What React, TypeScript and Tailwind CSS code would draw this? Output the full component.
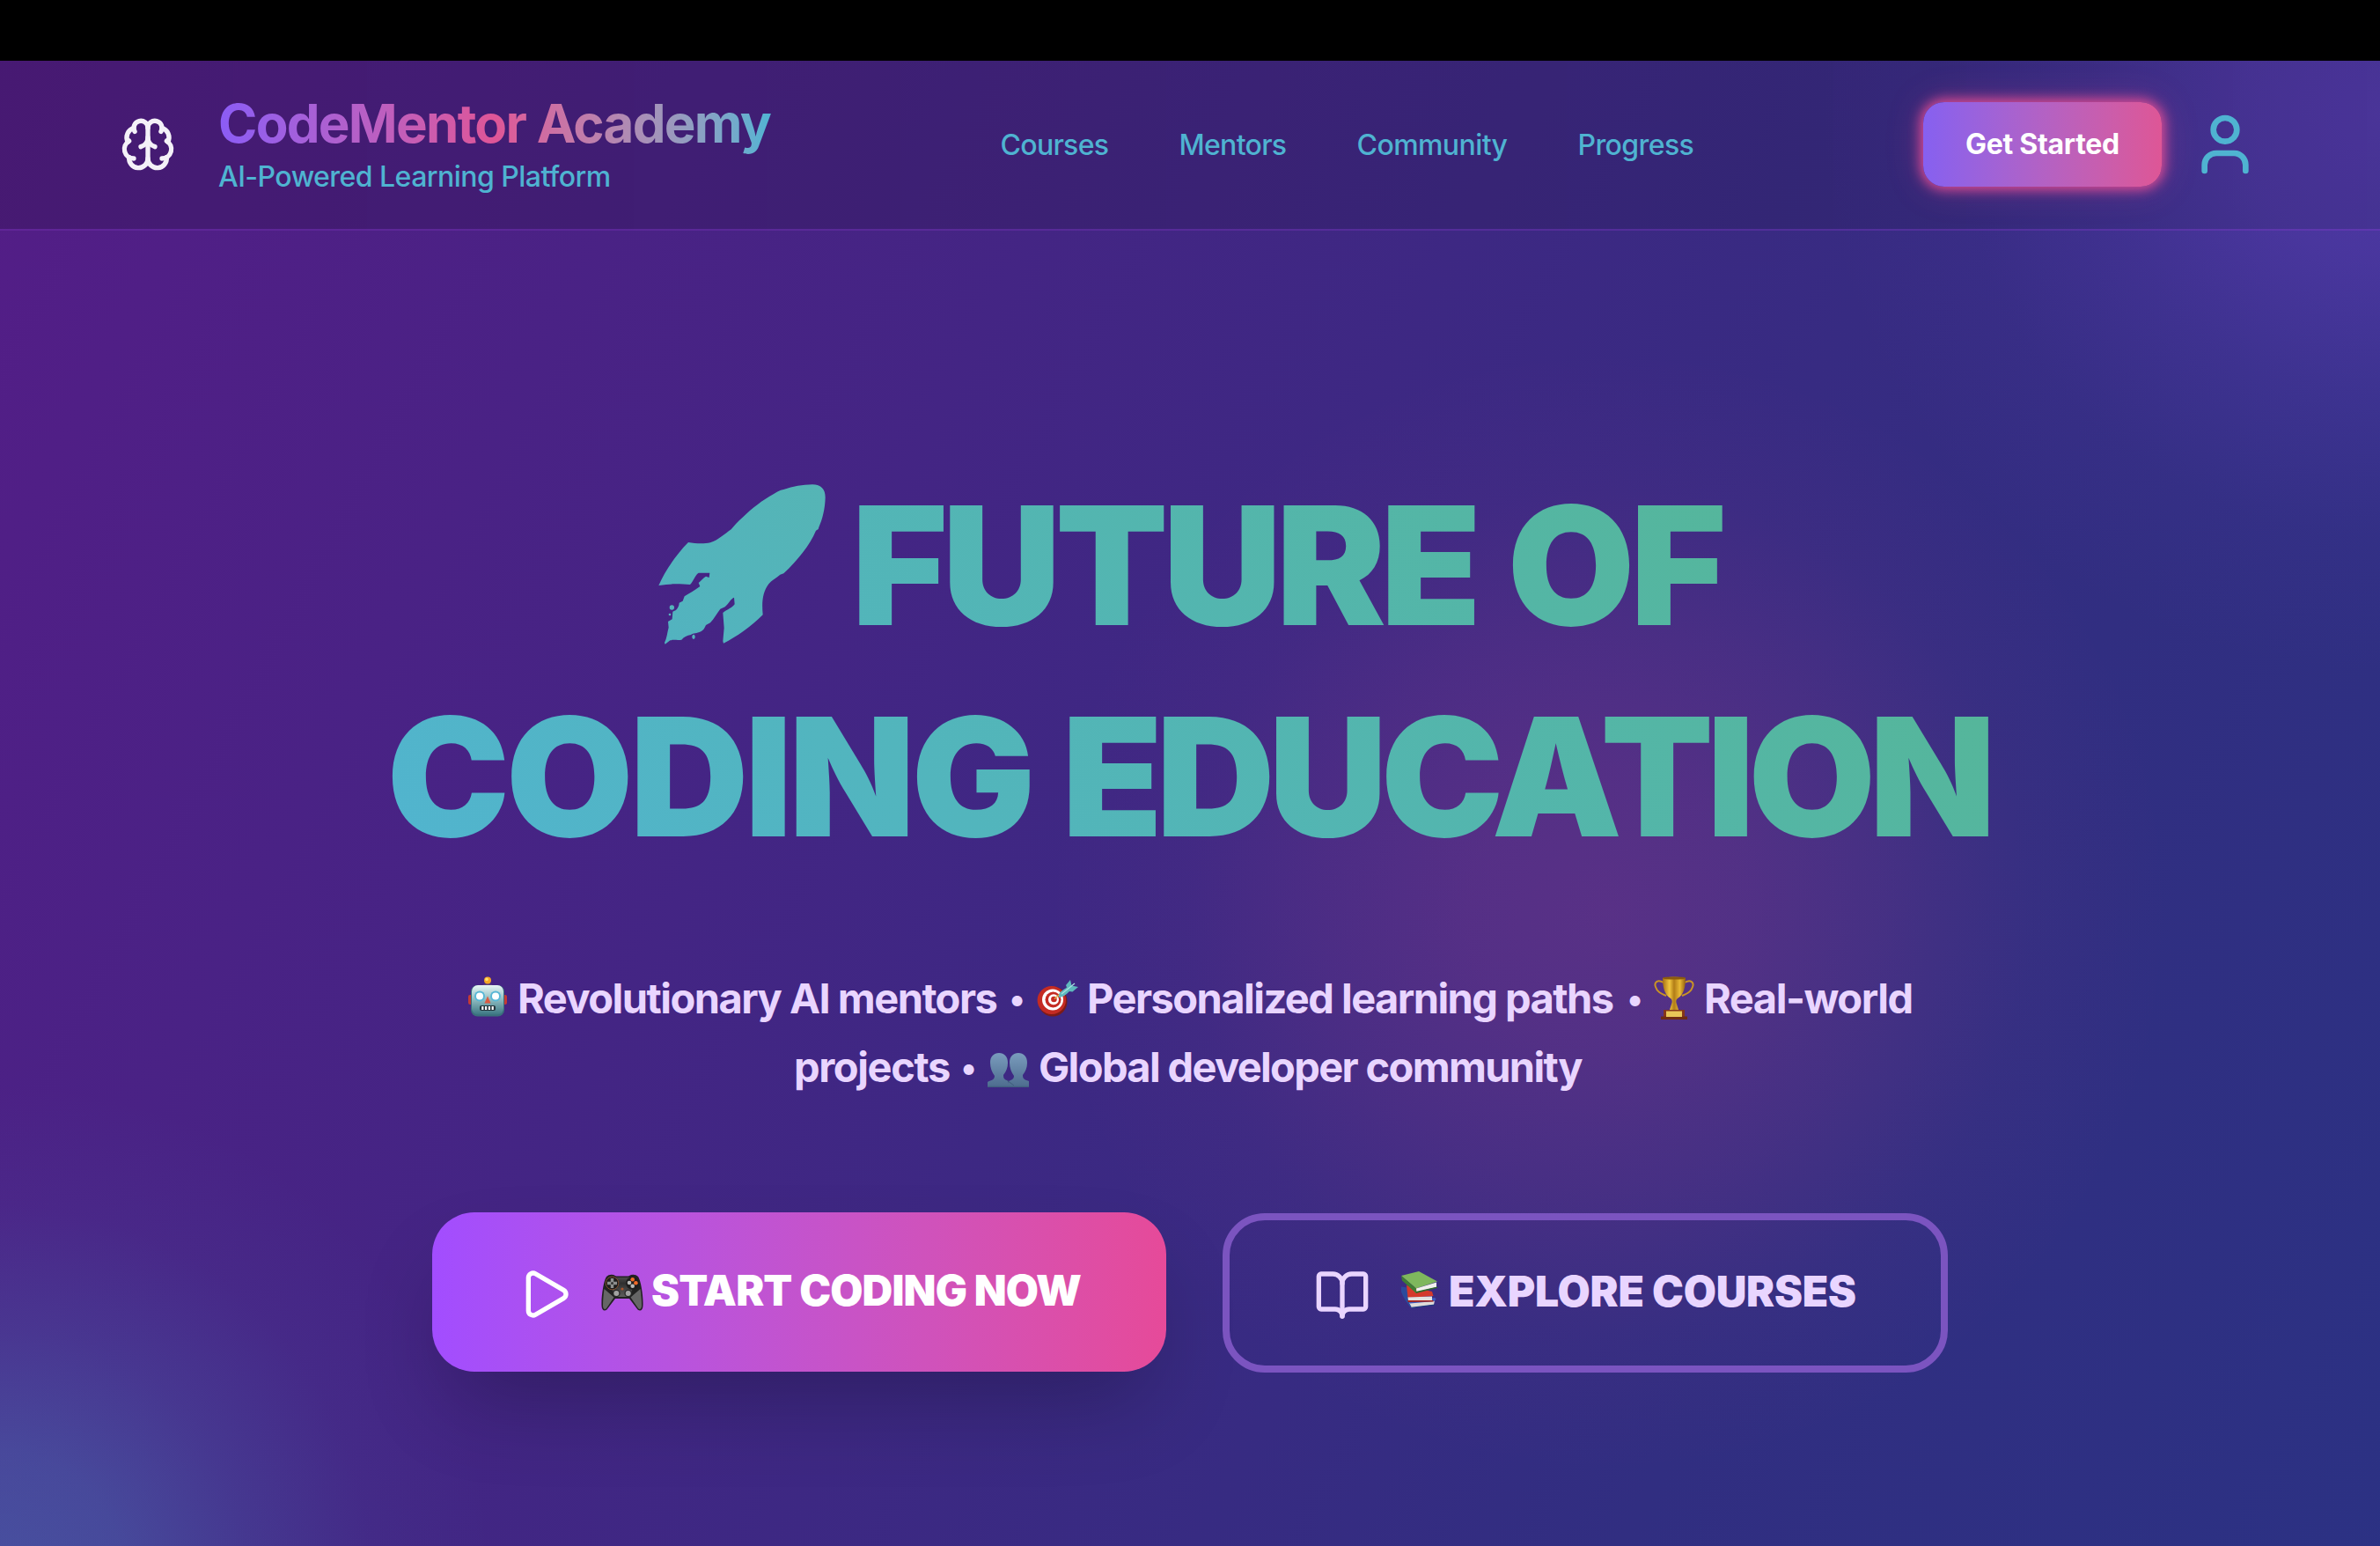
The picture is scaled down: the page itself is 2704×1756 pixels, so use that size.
import { BookOpen, Brain, Play, User } from "lucide-react";

function Rocket() {
  return (
    <svg viewBox="85 60 570 545" className="h-[181.7px] w-[190px] shrink-0" role="img" aria-label="🚀">
      <defs>
        <linearGradient id="rocket-fill" x1="0" y1="1" x2="1" y2="0">
          <stop offset="0" stopColor="#52b3c0" />
          <stop offset="1" stopColor="#55b5b5" />
        </linearGradient>
      </defs>
      <g fill="url(#rocket-fill)">
        <path d="M187 258C210 262 240 264 262 259C290 250 310 230 333 214L350 194C380 165 412 134 450 110C470 97 485 88 502 80L512 78C545 67 575 62 610 61C640 61 654 78 654 105C653 145 644 180 632 206L630 213L622 218C600 270 560 318 512 364L500 368C487 379 470 388 461 400C440 428 437 462 441 505C400 545 352 580 307 602L305 595L309 550L305 498C320 487 338 480 345 469L343 446C334 448 325 466 312 478L296 485C284 501 275 518 262 532L247 540C243 550 238 558 230 562C215 570 205 566 196 573C182 576 172 580 164 590C150 592 136 589 125 592L108 605L106 600C114 585 115 565 120 548L118 528L132 520L134 494L145 489C150 482 155 478 156 464L168 458L174 442C190 432 208 422 227 408L222 396C230 390 238 378 247 374L258 378L260 362L222 362C208 372 205 390 193 402C170 402 140 396 86 405C105 360 145 300 187 258Z" />
        <circle cx="131" cy="480" r="8" />
        <circle cx="124" cy="504" r="4" />
        <ellipse cx="205" cy="580" rx="5" ry="8" />
      </g>
    </svg>
  );
}

function Robot() {
  return (
    <svg viewBox="0 0 44 46" className="-mt-[4px] h-[46px] w-[44px] shrink-0" role="img" aria-label="🤖">
      <defs>
        <linearGradient id="robot-head" x1="0" y1="0" x2="0" y2="1">
          <stop offset="0" stopColor="#e9f6f5" />
          <stop offset=".4" stopColor="#9cc7cb" />
          <stop offset="1" stopColor="#3c7783" />
        </linearGradient>
      </defs>
      <rect x="0" y="21" width="6" height="11" rx="2" fill="#c43a35" />
      <rect x="38" y="21" width="6" height="11" rx="2" fill="#c43a35" />
      <path d="M16 11q1-3 6-3t6 3z" fill="#5b3f7a" />
      <circle cx="22" cy="4.4" r="4" fill="#f5a623" />
      <circle cx="21" cy="3.4" r="1.8" fill="#ffdf70" />
      <rect x="3" y="10" width="38" height="35.5" rx="7.5" fill="#3a6f7c" />
      <rect x="4" y="10" width="36" height="33.5" rx="7" fill="url(#robot-head)" />
      <circle cx="13" cy="22.5" r="6" fill="#57b7d6" />
      <circle cx="31" cy="22.5" r="6" fill="#57b7d6" />
      <circle cx="13" cy="22.5" r="4" fill="#fff" />
      <circle cx="31" cy="22.5" r="4" fill="#fff" />
      <path d="M22 22.5l3.6 8h-7.2z" fill="#dc5a41" />
      <rect x="13" y="33" width="18" height="6" rx="2" fill="#23343b" />
      <path d="M15.2 34h2.2v4h-2.2zM19 34h2.2v4H19zM22.8 34H25v4h-2.2zM26.6 34h2.2v4h-2.2z" fill="#fff" />
    </svg>
  );
}

function Target() {
  return (
    <svg viewBox="0 0 47 42" className="ml-[16px] h-[42px] w-[47px] shrink-0" role="img" aria-label="🎯">
      <ellipse cx="18" cy="24.5" rx="16.5" ry="17" fill="#7c1b17" />
      <ellipse cx="16.8" cy="23" rx="16.2" ry="16" fill="#c42b23" />
      <circle cx="18" cy="22.5" r="12" fill="#fff" />
      <circle cx="18.5" cy="22.5" r="9" fill="#c42b23" />
      <circle cx="19" cy="22.3" r="6" fill="#fff" />
      <circle cx="19.4" cy="22" r="3.3" fill="#c42b23" />
      <path d="M20 21.5L31 12" stroke="#e0b24a" strokeWidth="1.6" />
      <path d="M25 17c1-4 6-6 9-8.500L33 6l5-6 1.500 6.500L47 8l-6.500 5.500L37 13c-3 3-6 6-12 7z" fill="#5fb9bd" />
      <path d="M28 16L43 4" stroke="#a9e3e2" strokeWidth="1.200" />
    </svg>
  );
}

function Trophy() {
  return (
    <svg viewBox="0 0 46 49" className="-mt-[2px] ml-[15px] h-[49px] w-[46px] shrink-0" role="img" aria-label="🏆">
      <defs>
        <linearGradient id="trophy-gold" x1="0" y1="0" x2="1" y2="0">
          <stop offset="0" stopColor="#a66f14" />
          <stop offset=".3" stopColor="#f0c63f" />
          <stop offset=".5" stopColor="#b27d17" />
          <stop offset=".75" stopColor="#e8b935" />
          <stop offset="1" stopColor="#93600f" />
        </linearGradient>
      </defs>
      <path d="M11 7C4 3 0 7 2 12c1.500 5 5 7 12 10M35 7c7-4 11 0 9 5-1.500 5-5 7-12 10" fill="none" stroke="#c99325" strokeWidth="2" />
      <path d="M10 2q13-3 26 0c0 10-2 19-9 23-1.500 1-2 3-1.500 5l2.500 8H18l2.500-8c.5-2 0-4-1.500-5-7-4-9-13-9-23z" fill="url(#trophy-gold)" />
      <ellipse cx="23" cy="2" rx="13" ry="1.600" fill="#8c5b0e" />
      <path d="M11 38h24v8H11z" fill="#863519" />
      <path d="M8 45.500h30V49H8z" fill="#6f2a14" />
      <path d="M14 39.500h18V46H14z" fill="#e8c558" />
    </svg>
  );
}

function People() {
  return (
    <svg viewBox="0 0 47 39" className="ml-[15px] mt-[6px] h-[39px] w-[47px] shrink-0" role="img" aria-label="👥">
      <defs>
        <linearGradient id="people-fill" x1="0" y1="0" x2="0" y2="1">
          <stop offset="0" stopColor="#7a9cbd" />
          <stop offset="1" stopColor="#4d6c8e" />
        </linearGradient>
      </defs>
      <g fill="url(#people-fill)">
        <path d="M3 11C3 4 7 0 13 0s10 4 10 11c0 6-2 10-5 14 0 4 1 5 5 6.500L25 39H0v-6c3-2 8-2 8-7-3-4-5-9-5-15z" />
        <path d="M25 11C25 4 29 0 35 0s10 4 10 11c0 6-2 10-5 14 0 4 1 5 7 7v7H22l2-7c3-1.500 6-2 6-6-3-4-5-9-5-15z" />
      </g>
      <path d="M0 38.300h47M22 31l8 6" stroke="#3f5c7c" strokeWidth="1" />
    </svg>
  );
}

function Gamepad() {
  return (
    <svg viewBox="0 0 48 42" className="h-[42px] w-[48px] shrink-0" role="img" aria-label="🎮">
      <defs>
        <linearGradient id="pad-body" x1="0" y1="0" x2="0" y2="1">
          <stop offset="0" stopColor="#4a4a4a" />
          <stop offset=".3" stopColor="#2f2f2f" />
          <stop offset="1" stopColor="#5e5e5c" />
        </linearGradient>
      </defs>
      <path d="M6 3Q9 0 14 1l3 1.500h14L34 1q5-1 8 2c3 4 6 22 5.500 33 0 5-3 7-6 4.500L32 28H16L6.500 40.500C3.500 43 .5 41 .5 36 0 25 3 7 6 3z" fill="#222" />
      <path d="M3.500 17l11 9.500-8.500 12.500c-2 2-4 .5-4-3 0-6 .5-12 1.500-19zM44.500 17l-11 9.500 8.500 12.500c2 2 4 .5 4-3 0-6-.5-12-1.500-19z" fill="#666" />
      <path d="M14 4h20l2 12-4 10H16l-4-10z" fill="url(#pad-body)" />
      <circle cx="12.500" cy="10.500" r="7.300" fill="#1d1d1d" stroke="#83502f" strokeWidth="1" />
      <circle cx="35.500" cy="10.500" r="7.300" fill="#1d1d1d" />
      <path d="M10.800 5h3.400v3.800H18v3.400h-3.800V16h-3.400v-3.800H7V8.800h3.800z" fill="#8d8f8e" />
      <circle cx="12.500" cy="10.500" r="1.500" fill="#333" />
      <circle cx="35.700" cy="6.300" r="2.300" fill="#f06a28" />
      <circle cx="39.400" cy="10.200" r="2.300" fill="#f06a28" />
      <circle cx="32" cy="10" r="2.300" fill="#b9bab9" />
      <circle cx="35.700" cy="13.800" r="2.300" fill="#b9bab9" />
      <circle cx="24" cy="17" r="1.600" fill="#a8532c" />
      <circle cx="17.300" cy="22" r="4.300" fill="#292929" />
      <circle cx="30.700" cy="22" r="4.300" fill="#292929" />
      <circle cx="17.300" cy="22" r="3" fill="#a2a3a2" />
      <circle cx="30.700" cy="22" r="3" fill="#a2a3a2" />
    </svg>
  );
}

function Books() {
  return (
    <svg viewBox="0 0 42 42" className="ml-[3px] h-[42px] w-[42px] shrink-0" role="img" aria-label="📚">
      <path d="M0 17.500l7 1 3 14 1.500 9.500C6 36 1 27 0 23z" fill="#2b4a9c" />
      <path d="M9 35.500L38 33l-1 5-25 3.500z" fill="#dedcda" />
      <path d="M8 34L38 30l1.500 1.500-2 2.500L10 36.500z" fill="#3b5bc0" />
      <path d="M11.500 40.700L38 37.500v1.300L12.500 42z" fill="#1f3a80" />
      <path d="M6 16l29 7 1.500 5-29 2z" fill="#d4392c" />
      <path d="M7.500 29.500L35 28.500v4.500L8 33.500z" fill="#e4e1df" />
      <path d="M7 33h29.500v1.500L8 35z" fill="#a8251d" />
      <path d="M0 5L20 0l21 11.500-24 8z" fill="#7fb75d" />
      <path d="M0 5l17 14.500L17 25 1 10.500z" fill="#3f7d33" />
      <path d="M17 19.500L40 12.500v5.500L17.500 23.500z" fill="#f2f0ee" />
      <path d="M16.500 23L41 17.500v1.300L17 25z" fill="#2f6a2a" />
    </svg>
  );
}

function Bullet() {
  return <span className="flex w-[13px] shrink-0 justify-center text-[38px] font-semibold tracking-normal">•</span>;
}

function Header() {
  return (
    <header className="h-[193px] border-b-2 border-purple-500/25 bg-linear-to-r from-black/15 to-black/8 px-[136px]">
      <div className="flex h-full items-center justify-between">
        <div className="flex w-[740px] items-center gap-12">
          <Brain className="-mt-px size-16 shrink-0 text-[#f4f1f8]" strokeWidth={2} />
          <div className="flex flex-col">
            <span className="-mt-px mb-px w-[628px] whitespace-nowrap bg-linear-to-r from-[#8b5cf6] via-[#df5597] to-[#4fb4d3] bg-clip-text text-[60px] leading-[72px] font-bold tracking-[-1.72px] text-transparent">
              CodeMentor Academy
            </span>
            <span className="whitespace-nowrap text-[32px] leading-[48px] font-medium tracking-[-0.54px] text-[#4fb3d1]">
              AI-Powered Learning Platform
            </span>
          </div>
        </div>
        <nav className="flex w-[788px] text-[32px] leading-[48px] font-medium text-[#4fb3d1]">
          <a className="w-[203px] tracking-[-0.7px]">Courses</a>
          <a className="w-[202px] tracking-[-0.7px]">Mentors</a>
          <a className="w-[251px] tracking-[-0.58px]">Community</a>
          <a className="tracking-[-0.6px]">Progress</a>
        </nav>
        <div className="-mt-px flex items-center gap-8">
          <button className="h-24 w-[271px] rounded-3xl bg-linear-to-r from-[#8660f0] to-[#de5696] text-[32px] font-bold tracking-[-0.3px] text-white shadow-[0_0_14px_3px_rgba(240,80,150,0.9),0_0_40px_rgba(236,72,153,0.3)]">
            Get Started
          </button>
          <User className="size-20 text-[#4fb3d1]" strokeWidth={2} />
        </div>
      </div>
    </header>
  );
}

export default function App() {
  return (
    <div className="flex h-[1756px] w-[2704px] flex-col overflow-hidden font-['Inter',sans-serif]">
      <div className="h-[69px] shrink-0 bg-black" />
      <div className="flex-1 bg-[radial-gradient(circle_560px_at_0px_1720px,rgba(70,175,215,0.32)_0%,rgba(70,175,215,0.27)_25%,rgba(70,175,215,0.14)_50%,rgba(70,175,215,0.04)_75%,rgba(70,175,215,0)_100%),radial-gradient(circle_640px_at_2704px_60px,rgba(139,76,235,0.34)_0%,rgba(139,76,235,0.27)_25%,rgba(139,76,235,0.14)_50%,rgba(139,76,235,0.04)_75%,rgba(139,76,235,0)_100%),radial-gradient(circle_640px_at_1828px_966px,rgba(236,72,153,0.19)_0%,rgba(236,72,153,0.16)_25%,rgba(236,72,153,0.1)_50%,rgba(236,72,153,0.03)_75%,rgba(236,72,153,0)_100%),linear-gradient(118deg,#561c87_-5%,#312e81_76%,#1e3a8a_162%)]">
        <Header />
        <main className="flex flex-col items-center pt-[260px]">
          <h1 className="flex w-[1826px] flex-col items-center bg-linear-45 from-[#51b4d0] to-[#56b692] bg-clip-text text-[187px] leading-[240px] font-black whitespace-nowrap text-transparent">
            <span className="flex w-[1209px]">
              <span className="flex h-[240px] w-[220px] shrink-0 pt-[28px]">
                <Rocket />
              </span>
              <span className="w-[745px] shrink-0 tracking-[-6.28px]">FUTURE</span>
              <span className="tracking-[-5.3px]">OF</span>
            </span>
            <span className="flex w-[1825px]">
              <span className="w-[767px] shrink-0 tracking-[-4.45px]">CODING</span>
              <span className="tracking-[-7.5px]">EDUCATION</span>
            </span>
          </h1>
          <div className="mt-[93px] flex flex-col items-center text-[47px] leading-[78px] font-bold whitespace-nowrap text-[#e9d5ff]">
            <div className="flex h-[78px] w-[1640px] items-center">
              <Robot />
              <span className="ml-[12px] w-[561px] shrink-0 tracking-[-1.52px]">Revolutionary AI mentors</span>
              <Bullet />
              <Target />
              <span className="ml-[10px] w-[616px] shrink-0 tracking-[-1.55px]">Personalized learning paths</span>
              <Bullet />
              <Trophy />
              <span className="ml-[11px] shrink-0 tracking-[-1.45px]">Real-world</span>
            </div>
            <div className="flex h-[78px] w-[900px] items-center">
              <span className="w-[192px] shrink-0 tracking-[-1.4px]">projects</span>
              <Bullet />
              <People />
              <span className="ml-[11px] shrink-0 tracking-[-1.65px]">Global developer community</span>
            </div>
          </div>
          <div className="mt-[126px] flex items-start gap-16 text-[48px] font-black whitespace-nowrap">
            <button className="flex h-[181px] w-[834px] items-center rounded-[48px] bg-linear-to-r from-[#a24dff] to-[#e64a99] px-24 text-white shadow-[0_50px_100px_-24px_rgba(0,0,0,0.25)]">
              <Play className="mt-1 size-16 shrink-0" strokeWidth={2} />
              <span className="ml-8 flex items-center">
                <Gamepad />
                <span className="-mt-1 ml-[9px] tracking-[-0.84px]">START CODING NOW</span>
              </span>
            </button>
            <button className="mt-px flex h-[181px] w-[824px] items-center rounded-[48px] border-8 border-[#7b54c0] px-24 text-[#e9d5ff]">
              <BookOpen className="mt-1 size-16 shrink-0" strokeWidth={2} />
              <span className="ml-8 flex items-center">
                <span className="-mt-2 w-[57px]">
                  <Books />
                </span>
                <span className="-mt-1 tracking-[-0.21px]">EXPLORE COURSES</span>
              </span>
            </button>
          </div>
        </main>
      </div>
    </div>
  );
}
